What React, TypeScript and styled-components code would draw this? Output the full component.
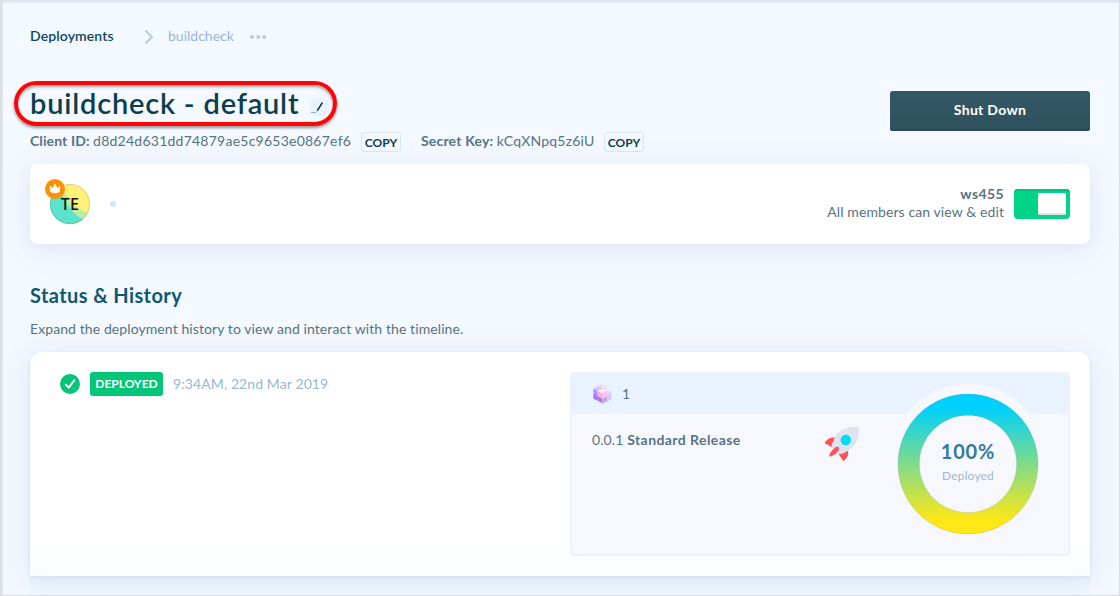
import React from "react";
import styled, { createGlobalStyle } from "styled-components";

const Global = createGlobalStyle`
  * { box-sizing: border-box; }
  body { margin: 0; font-family: Lato, "Open Sans", sans-serif; font-size: 14px; color: #567482; }
  h1, h2, p { margin: 0; }
`;

const Page = styled.main`
  position: relative;
  width: 1120px;
  height: 596px;
  overflow: hidden;
  padding: 0 30px;
  display: flex;
  flex-direction: column;
  background: #f4f8ff;
`;

const Frame = styled.div`
  position: absolute;
  inset: 0;
  z-index: 5;
  pointer-events: none;
  border: solid #dcdfe6;
  border-width: 2px 1px 1px 2px;
  border-top-color: #dfe4ee;
  box-shadow: inset 0 1px 1px #e6ebf4, inset 1px 0 1px #e8ecf4;
`;

const Text = styled.span<{ $size?: number; $weight?: number; $color?: string; $track?: number }>`
  font-size: ${(p) => p.$size ?? 14}px;
  font-weight: ${(p) => p.$weight ?? 400};
  color: ${(p) => p.$color ?? "inherit"};
  letter-spacing: ${(p) => p.$track ?? 0}px;
  white-space: pre;
`;

const Breadcrumbs = styled.nav`
  display: flex;
  align-items: center;
  height: 72px;
  flex: none;
  svg { flex: none; margin-top: 2px; }
`;
const Crumb = styled.div<{ $width: number }>`
  width: ${(p) => p.$width}px;
  display: flex;
  padding-bottom: 1px;
`;
const Header = styled.header`
  display: flex;
  justify-content: space-between;
  height: 92px;
  flex: none;
`;
const Identity = styled.div`
  padding-top: 12px;
`;
const TitleRow = styled.div`
  position: relative;
  display: flex;
  align-items: center;
  height: 40px;
`;
const Title = styled.h1`
  width: 280px;
  padding-bottom: 2px;
  font-size: 29px;
  line-height: 38px;
  font-weight: 600;
  color: #0b3f4d;
  letter-spacing: 0.8px;
  white-space: nowrap;
`;
const Highlight = styled.div`
  position: absolute;
  left: -16px;
  top: -3px;
  width: 323px;
  height: 45px;
  border: 4px solid #fb0505;
  border-radius: 23px;
  box-shadow: 0 2px 3px rgba(0, 0, 0, 0.4), inset 0 2px 3px rgba(0, 0, 0, 0.35);
`;
const Keys = styled.div`
  display: flex;
  align-items: center;
  height: 20px;
  margin-top: 8px;
`;
const KeyField = styled.div<{ $width: number }>`
  display: flex;
  align-items: center;
  justify-content: space-between;
  width: ${(p) => p.$width}px;
  margin-right: 20px;
`;
const KeyText = styled.div`
  display: flex;
  padding-bottom: 3px;
`;
const CopyButton = styled.button`
  width: 40px;
  height: 20px;
  padding: 1px 0 0;
  border: 1px solid #d5e6fc;
  border-radius: 3px;
  background: #f5f9ff;
  font: 700 12px/18px Lato, sans-serif;
  color: #0b3f4d;
  white-space: nowrap;
`;
const ShutDown = styled.button`
  width: 200px;
  height: 40px;
  margin-top: 19px;
  padding: 0 0 3px;
  border: 0;
  border-radius: 3px;
  background: linear-gradient(#335865, #2f505d);
  box-shadow: inset 0 -2px #2a4856;
  font: inherit;
  color: #fff;
`;
const MembersCard = styled.section`
  display: flex;
  align-items: center;
  height: 80px;
  flex: none;
  padding: 0 20px;
  border-radius: 8px;
  background: #fff;
  box-shadow: 0 5px 15px rgba(50, 80, 110, 0.07), 0 5px 40px rgba(40, 110, 220, 0.05);
`;
const Avatar = styled.div`
  position: relative;
  width: 40px;
  height: 40px;
  svg { display: block; }
`;
const Initials = styled.span`
  position: absolute;
  inset: 0;
  font: 500 16px/40px "Noto Sans", sans-serif;
  letter-spacing: 0.4px;
  color: #111;
  text-align: center;
`;
const Crown = styled.div`
  position: absolute;
  left: -5px;
  top: -5px;
`;
const Dot = styled.i`
  width: 6px;
  height: 6px;
  margin-left: 20px;
  border-radius: 50%;
  background: #d6e4ff;
`;
const Workspace = styled.div`
  margin-left: auto;
  display: flex;
  flex-direction: column;
  align-items: flex-end;
  padding-bottom: 2px;
  line-height: 18px;
`;
const Toggle = styled.div`
  display: flex;
  justify-content: flex-end;
  width: 56px;
  height: 30px;
  margin-left: 10px;
  padding: 4px;
  border-radius: 4px;
  background: #00d488;
  box-shadow: inset 0 2px #00c47d;
`;
const Knob = styled.i`
  width: 28px;
  height: 22px;
  border-radius: 2px;
  background: #fff;
  box-shadow: inset 0 -2px #e4e4e4;
`;
const Intro = styled.div`
  height: 108px;
  flex: none;
  padding-top: 37px;
`;
const SectionTitle = styled.h2`
  font-size: 20px;
  line-height: 28px;
  letter-spacing: 0.4px;
  font-weight: 700;
  color: #0c5a72;
`;
const Lead = styled.p`
  margin-top: 11px;
  line-height: 18px;
`;
const HistoryCard = styled.section`
  display: flex;
  justify-content: space-between;
  height: 224px;
  flex: none;
  padding: 20px 20px 20px 30px;
  border-radius: 12px 12px 0 0;
  background: linear-gradient(#fff 190px, #fafcfd);
  box-shadow: 0 2px 4px rgba(70, 140, 160, 0.13), 0 4px 28px rgba(70, 150, 200, 0.14);
`;
const NextPanel = styled.div`
  height: 20px;
  flex: none;
  background: linear-gradient(rgba(215, 230, 240, 0.35), rgba(230, 239, 250, 0.25));
`;
const StatusLine = styled.div`
  display: flex;
  align-items: center;
  height: 24px;
`;
const Badge = styled.span`
  width: 73px;
  height: 24px;
  margin: 0 10px;
  border-radius: 3px;
  background: #00c678;
  line-height: 22px;
  text-align: center;
`;
const Stamp = styled.time`
  padding-bottom: 2px;
`;
const Release = styled.div`
  position: relative;
  width: 500px;
  height: 184px;
  border: 2px solid #eaf1ff;
  border-radius: 4px;
  background: #f6f8fd;
`;
const ReleaseHead = styled.div`
  display: flex;
  align-items: center;
  gap: 10px;
  height: 40px;
  padding: 0 0 0 20px;
  background: #eaf1ff;
  span { padding-bottom: 2px; }
`;
const ReleaseBody = styled.div`
  display: flex;
  padding: 12px 0 0 20px;
`;
const ReleaseName = styled.div`
  width: 232px;
  line-height: 28px;
`;
const Meter = styled.div`
  position: absolute;
  right: 20px;
  top: 10px;
  width: 160px;
  height: 160px;
  border-radius: 50%;
  background: #f6f8fd;
  svg { position: absolute; inset: 0; }
`;
const MeterLabel = styled.div`
  position: relative;
  display: flex;
  flex-direction: column;
  align-items: center;
  padding-top: 53px;
  line-height: 28px;
  span + span { line-height: 22px; }
`;

const Check = () => (
  <svg width="20" height="20" viewBox="0 0 20 20">
    <circle cx="10" cy="10" r="10" fill="#00c678" />
    <path d="M5.8 10.6l3 3 5.4-7.3" fill="none" stroke="#fff" strokeWidth="2" strokeLinecap="round" strokeLinejoin="round" />
  </svg>
);

const Cubes = () => (
  <svg width="20" height="20" viewBox="-1 0 20 20">
    <path d="M9 0l5 2.500v4L9 9 4 6.500v-4z" fill="#eadff9" />
    <path d="M0.500 4.500L5 2.300l4 2v5l-4.500 2.200-4-2z" fill="#d9c4f7" />
    <path d="M0.500 5l4 2v9.500l-4-2z" fill="#b58cf5" />
    <path d="M0.500 10l4 2v4.500l-4-2z" fill="#9b75f3" />
    <path d="M4.500 12l5 2.500V19.500l-5-3z" fill="#a67cf2" />
    <path d="M9.500 14.500l4.500-2.300v5l-4.500 2.300z" fill="#bfa5f5" />
    <path d="M14 9.500l4.500-2v8L14 17.500z" fill="#d9cbf8" />
    <path d="M12 8l3.500-2 3 1.500-4.500 2.500z" fill="#e8e0fb" />
    <path d="M4.500 7l4.700-2.300L14 7v5l-4.800 2.500L4.500 12z" fill="#ffa9e7" />
    <path d="M4.500 7l4.700-2.300L14 7 9.200 9.500z" fill="#ffe9f6" />
    <path d="M9.200 9.500L14 7v5l-4.800 2.500z" fill="#ffc0ec" />
    <path d="M14.200 2.500L18.500 0v7.500l-2.500-1.500-2 1z" fill="#eaf1ff" />
  </svg>
);

const Rocket = () => (
  <svg width="36" height="36" viewBox="0 0 36 36">
    <path d="M11 11.500C6 11 3 13 .5 17l8 4.500zM24 24.500c1 5-1 7.500-4.500 10.800l-5-7.300z" fill="#ff5158" />
    <path d="M35 .8C23 .5 14 4 10.500 12.500L7.500 19c1 4 5.500 9 10 9l6-3C32 21 35.500 12 35 .8z" fill="#dde4ee" />
    <path d="M5.200 30.600c0-3 3-7 6-9.200 3.300-1.800 4.800.7 3.200 3.300-2.200 3-6 5.800-9.200 5.900z" fill="#ff5158" />
    <circle cx="21.800" cy="14" r="5.200" fill="#00dcf5" />
  </svg>
);

const Pen = () => (
  <svg width="20" height="20" viewBox="0 0 20 20">
    <circle cx="9" cy="10" r="10" fill="#eaf1ff" />
    <path d="M6.500 14.500l.6-2 4.600-7.300 1.400.7-4.800 7.700z" fill="#0b3340" />
    <path d="M1 15.500h5" stroke="#8eb0ce" />
  </svg>
);

const PenSlot = styled.span`
  display: flex;
  padding-top: 6px;
`;

export default function App() {
  return (
    <>
      <Global />
      <Page>
        <Frame />
        <Breadcrumbs>
          <Crumb $width={114}>
            <Text $weight={600} $color="#0c4a5a" $track={0.12}>Deployments</Text>
          </Crumb>
          <svg width="24" height="16" viewBox="0 0 24 16">
            <path d="M1.500 1.500L8 8l-6.500 6.500" fill="none" stroke="#bccddc" strokeWidth="2.200" />
          </svg>
          <Crumb $width={82}>
            <Text $color="#98b7d6">buildcheck</Text>
          </Crumb>
          <svg width="18" height="6" viewBox="0 0 18 6">
            <g fill="#bccbdb"><circle cx="2" cy="3" r="2" /><circle cx="8.200" cy="3" r="2" /><circle cx="14.200" cy="3" r="2" /></g>
          </svg>
        </Breadcrumbs>
        <Header>
          <Identity>
            <TitleRow>
              <Title>buildcheck - default</Title>
              <PenSlot><Pen /></PenSlot>
              <Highlight />
            </TitleRow>
            <Keys>
              <KeyField $width={371}>
                <KeyText><Text $weight={700} $track={0.1}>Client ID: </Text><Text $track={0.24}>d8d24d631dd74879ae5c9653e0867ef6</Text></KeyText>
                <CopyButton>COPY</CopyButton>
              </KeyField>
              <KeyField $width={223}>
                <KeyText><Text $weight={700} $track={0.18}>Secret Key: </Text><Text $track={0.2}>kCqXNpq5z6iU</Text></KeyText>
                <CopyButton>COPY</CopyButton>
              </KeyField>
            </Keys>
          </Identity>
          <ShutDown><Text $weight={700} $track={0.3}>Shut Down</Text></ShutDown>
        </Header>
        <MembersCard>
          <Avatar>
            <svg width="40" height="40" viewBox="0 0 40 40">
              <defs><clipPath id="face"><circle cx="20" cy="20" r="20" /></clipPath></defs>
              <g clipPath="url(#face)">
                <path d="M0 0h40v40H0z" fill="#fff07a" />
                <path d="M12 0C17 16 24 24 40 30v10H0V0z" fill="#bfeaa0" />
                <path d="M8 0C14 18 20 28 34 36v4H0V0z" fill="#5be3cd" />
              </g>
              <circle cx="20" cy="20" r="19.500" fill="none" stroke="#506040" strokeOpacity=".22" />
            </svg>
            <Initials>TE</Initials>
            <Crown>
              <svg width="20" height="20" viewBox="0 0 20 20">
                <circle cx="10" cy="10" r="10" fill="#ff9100" />
                <path d="M5 7.200l2.600 2.300L10 5l2.400 4.500L15 7.200l-.6 5.600q-4.400 2.400-8.800 0z" fill="#fff" stroke="#fff" strokeWidth=".6" strokeLinejoin="round" />
              </svg>
            </Crown>
          </Avatar>
          <Dot />
          <Workspace>
            <Text $weight={700} $track={0.4}>ws455</Text>
            <Text $track={0.1}>All members can view &amp; edit</Text>
          </Workspace>
          <Toggle><Knob /></Toggle>
        </MembersCard>
        <Intro>
          <SectionTitle>Status &amp; History</SectionTitle>
          <Lead><Text $track={0.09}>Expand the deployment history to view and interact with the timeline.</Text></Lead>
        </Intro>
        <HistoryCard>
          <StatusLine>
            <Check />
            <Badge><Text $size={12} $weight={700} $color="#fff">DEPLOYED</Text></Badge>
            <Stamp><Text $color="#98b7d6" $track={0.1}>9:34AM, 22nd Mar 2019</Text></Stamp>
          </StatusLine>
          <Release>
            <ReleaseHead><Cubes /><Text>1</Text></ReleaseHead>
            <ReleaseBody>
              <ReleaseName><Text $track={0.1}>0.0.1 </Text><Text $weight={700} $track={0.43}>Standard Release</Text></ReleaseName>
              <Rocket />
            </ReleaseBody>
            <Meter>
              <svg width="160" height="160" viewBox="0 0 160 160">
                <defs>
                  <linearGradient id="ring" x1="0" y1="0" x2="0" y2="1">
                    <stop offset=".1" stopColor="#00d0fb" />
                    <stop offset=".9" stopColor="#ffe718" />
                  </linearGradient>
                </defs>
                <path d="M80 10a70 70 0 1 1 0 140a70 70 0 1 1 0-140zM80 31.300a48.700 48.700 0 1 0 0 97.400a48.700 48.700 0 1 0 0-97.400z" fill="url(#ring)" stroke="#456" strokeOpacity=".3" strokeWidth=".5" />
              </svg>
              <MeterLabel>
                <Text $size={20} $weight={700} $color="#367a9b" $track={0.8}>100%</Text>
                <Text $size={12} $color="#a5b7c8" $track={0.15}>Deployed</Text>
              </MeterLabel>
            </Meter>
          </Release>
        </HistoryCard>
        <NextPanel />
      </Page>
    </>
  );
}
